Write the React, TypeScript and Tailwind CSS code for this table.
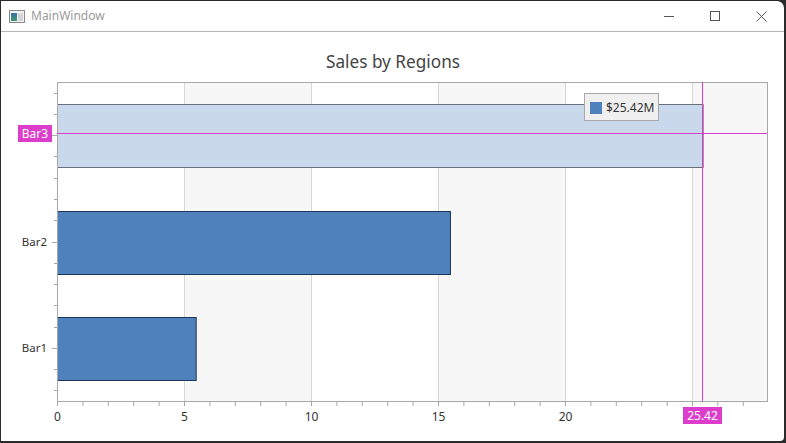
import React from "react";

const X0 = 57;
const PX = 25.4; // pixels per unit
const TOP = 82;
const BOTTOM = 401;
const RIGHT = 767;
const MAG = "#dc3ecb";

const xAt = (v: number) => X0 + v * PX;
const catH = (BOTTOM - TOP) / 3;
const tickStep = catH / 5;

const bars = [
  { name: "Bar3", value: 25.42, top: 104, hi: true },
  { name: "Bar2", value: 15.47, top: 211, hi: false },
  { name: "Bar1", value: 5.46, top: 317, hi: false },
];

function WindowIcon() {
  return (
    <svg width="16" height="13" viewBox="0 0 16 13">
      <rect x="0.5" y="0.5" width="15" height="12" fill="#f2f2f2" stroke="#8a8a8a" />
      <rect x="2" y="3" width="6" height="8" fill="url(#g)" />
      <rect x="9" y="3" width="5" height="8" fill="#d4d4d4" />
      <defs>
        <linearGradient id="g" x1="0" y1="0" x2="0" y2="1">
          <stop offset="0" stopColor="#3b6fb0" />
          <stop offset="1" stopColor="#3f9a6a" />
        </linearGradient>
      </defs>
    </svg>
  );
}

function Chart() {
  const bands = [5, 15, 25];
  const grid = [5, 10, 15, 20, 25];
  const minor = Array.from({ length: 28 }, (_, i) => i);
  const yTicks = Array.from({ length: 15 }, (_, k) => TOP + tickStep * (k + 0.5));
  const font = "'Noto Sans', 'Open Sans', sans-serif";
  return (
    <svg width="782" height="409" viewBox="1 32 782 409" className="block">
      <text x="393" y="68" textAnchor="middle" fontSize="17.2" fill="#444" fontFamily={font}>
        Sales by Regions
      </text>
      {bands.map((b) => (
        <rect key={b} x={xAt(b)} y={TOP} width={Math.min(xAt(b + 5), RIGHT) - xAt(b)} height={BOTTOM - TOP} fill="#f7f7f7" />
      ))}
      {grid.map((g) => (
        <line key={g} x1={xAt(g) + 0.5} x2={xAt(g) + 0.5} y1={TOP} y2={BOTTOM} stroke="#d6d6d6" />
      ))}
      {bars.map((b) => (
        <rect
          key={b.name}
          x={X0 + 0.5}
          y={b.top + 0.5}
          width={b.value * PX}
          height={63}
          fill={b.hi ? "#c9d8ea" : "#4f81bd"}
          stroke={b.hi ? "#6b6f7a" : "#1d3554"}
        />
      ))}
      <rect x={X0 + 0.5} y={TOP + 0.5} width={RIGHT - X0} height={BOTTOM - TOP} fill="none" stroke="#a8a8a8" />
      {minor.map((m) => (
        <line key={m} x1={xAt(m) + 0.5} x2={xAt(m) + 0.5} y1={BOTTOM} y2={BOTTOM + 5} stroke="#a8a8a8" />
      ))}
      {yTicks.map((y, k) => (
        <line key={k} x1={k % 5 === 2 ? 52 : 54} x2={X0} y1={Math.round(y) + 0.5} y2={Math.round(y) + 0.5} stroke="#a8a8a8" />
      ))}
      {bars.map((b, i) =>
        b.hi ? null : (
          <text key={b.name} x="47" y={Math.round(TOP + catH * (i + 0.5)) + 4} textAnchor="end" fontSize="11.5" fill="#333" fontFamily={font}>
            {b.name}
          </text>
        )
      )}
      {[0, 5, 10, 15, 20].map((v) => (
        <text key={v} x={xAt(v) + 0.5} y="421" textAnchor="middle" fontSize="12" fill="#333" fontFamily={font}>
          {v}
        </text>
      ))}
      {/* crosshair */}
      <line x1={X0} x2={RIGHT} y1="133.5" y2="133.5" stroke={MAG} />
      <line x1="702.5" x2="702.5" y1={TOP} y2={BOTTOM} stroke={MAG} />
      <rect x="18" y="125" width="34" height="17" fill={MAG} />
      <text x="35" y="138" textAnchor="middle" fontSize="12" fill="#fff" fontFamily={font}>
        Bar3
      </text>
      <rect x="683" y="407" width="39" height="17" fill={MAG} />
      <text x="702.5" y="420" textAnchor="middle" fontSize="12" fill="#fff" fontFamily={font}>
        25.42
      </text>
      {/* tooltip */}
      <rect x="584.5" y="93.5" width="74" height="27" fill="#f0f0f0" stroke="#a8a8a8" />
      <rect x="590" y="102" width="12" height="12" fill="#4f81bd" />
      <text x="606" y="112" fontSize="12" fill="#333" fontFamily={font}>
        $25.42M
      </text>
    </svg>
  );
}

export default function App() {
  return (
    <div className="w-[786px] h-[443px] bg-[#2b2b2b] p-px pb-[2px] pr-[2px] overflow-hidden">
      <div className="h-full bg-white rounded-tr-[7px] rounded-br-[4px] flex flex-col overflow-hidden" style={{ fontFamily: "'Noto Sans', 'Open Sans', sans-serif" }}>
        <div className="h-[31px] flex items-center border-b border-[#b5b5b5] shrink-0">
          <div className="pl-[8px] pr-[6px] flex items-center">
            <WindowIcon />
          </div>
          <span className="text-[12px] text-[#9a9a9a]">MainWindow</span>
          <div className="ml-auto flex items-center h-full">
            <div className="w-[46px] h-full flex items-center justify-center">
              <div className="w-[10px] h-px bg-[#555]" />
            </div>
            <div className="w-[46px] h-full flex items-center justify-center">
              <div className="w-[10px] h-[10px] border border-[#555]" />
            </div>
            <div className="w-[46px] h-full flex items-center justify-center">
              <svg width="11" height="11" viewBox="0 0 11 11">
                <path d="M0.5 0.5 L10.5 10.5 M10.5 0.5 L0.5 10.5" stroke="#555" strokeWidth="1" />
              </svg>
            </div>
          </div>
        </div>
        <div className="flex-1">
          <Chart />
        </div>
      </div>
    </div>
  );
}
